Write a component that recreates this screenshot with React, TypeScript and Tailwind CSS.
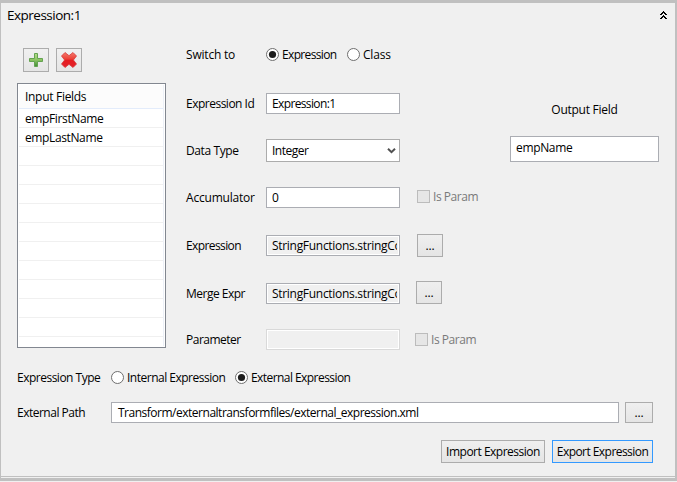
import React from "react";

function Radio({ checked = false }: { checked?: boolean }) {
  return (
    <svg className="block h-[13px] w-[13px] shrink-0" viewBox="0 0 13 13">
      <circle cx="6.5" cy="6.5" r="6" fill="#fff" stroke="#6e6e6e" />
      {checked && <circle cx="6.5" cy="6.5" r="3.6" fill="#1c1c1c" />}
    </svg>
  );
}

function Label({ className = "", children }: { className?: string; children: React.ReactNode }) {
  return <span className={`block shrink-0 whitespace-nowrap leading-4 ${className}`}>{children}</span>;
}

function Browse({ className = "" }: { className?: string }) {
  return (
    <button
      className={`flex shrink-0 items-center justify-center border border-[#acacac] bg-linear-to-b from-[#efefef] to-[#e5e5e5] leading-4 tracking-[-0.2px] ${className}`}
    >
      ...
    </button>
  );
}

function Row({ label, tracking = "", className, children }: { label: string; tracking?: string; className: string; children: React.ReactNode }) {
  return (
    <div className={`flex items-center ${className}`}>
      <div className="w-[80px] shrink-0">
        <Label className={tracking}>{label}</Label>
      </div>
      {children}
    </div>
  );
}

function Field({ children, readOnly = false }: { children?: React.ReactNode; readOnly?: boolean }) {
  return (
    <div
      className={`flex h-[21px] w-[134px] shrink-0 items-center border border-[#abadb3] ${readOnly ? "bg-[#f0f0f0] shadow-[inset_0_0_0_1px_#fff]" : "bg-white"}`}
    >
      <div className="ml-[5px] w-[125px] overflow-hidden whitespace-nowrap leading-4">{children}</div>
    </div>
  );
}

function IsParam({ className = "" }: { className?: string }) {
  return (
    <div className={`flex items-center text-[#7a7a7a] ${className}`}>
      <span className="h-[13px] w-[13px] border border-[#bcbcbc] bg-[#e6e6e6]" />
      <Label className="ml-[3px] tracking-[-0.45px]">Is Param</Label>
    </div>
  );
}

const rows = ["empFirstName", "empLastName", "", "", "", "", "", "", "", "", "", ""];

export default function App() {
  return (
    <div className="h-[482px] w-[677px] overflow-hidden bg-[#f0f0f0] font-['Open_Sans','Noto_Sans',sans-serif] text-[12px] tracking-[-0.5px] text-black">
      <div className="flex h-[481px] flex-col border-t-[3px] border-r-2 border-b-[3px] border-l border-[#c0c0c0] bg-[#f0f0f0]">
        <header className="flex h-[25px] shrink-0 items-start justify-between pr-[8px] pl-[6px]">
          <Label className="pt-[4px] text-[13.5px] tracking-[-0.5px]">Expression:1</Label>
          <svg className="mt-[8px] h-[8px] w-[7px]" viewBox="0 0 7 8" shapeRendering="crispEdges">
            <path
              d="M3 0h1v1H3zM2 1h3v1H2zM1 2h2v1H1zM4 2h2v1H4zM0 3h2v1H0zM5 3h2v1H5zM3 4h1v1H3zM2 5h3v1H2zM1 6h2v1H1zM4 6h2v1H4zM0 7h2v1H0zM5 7h2v1H5z"
              fill="#000"
            />
          </svg>
        </header>

        <main className="flex h-[320px] shrink-0 pt-[20px] pl-4">
          <section className="w-[149px] shrink-0">
            <div className="flex gap-[7px] pl-[6px]">
              <button className="flex h-6 w-[26px] items-center justify-center border border-[#acacac] bg-linear-to-b from-[#f0f0f0] to-[#e5e5e5]">
                <svg className="h-4 w-4" viewBox="0 0 16 16">
                  <defs>
                    <linearGradient id="plus" x1="0" y1="0" x2="0" y2="1">
                      <stop offset="0" stopColor="#b5dc8c" />
                      <stop offset=".5" stopColor="#8cc462" />
                      <stop offset="1" stopColor="#3f8c36" />
                    </linearGradient>
                  </defs>
                  <path d="M6.5 1.5h3v5h5v3h-5v5h-3v-5h-5v-3h5z" fill="url(#plus)" stroke="#64a350" />
                </svg>
              </button>
              <button className="flex h-6 w-[26px] items-center justify-center border border-[#acacac] bg-linear-to-b from-[#f0f0f0] to-[#e5e5e5]">
                <svg className="h-4 w-4" viewBox="0 0 16 16">
                  <defs>
                    <linearGradient id="cross" x1="0" y1="0" x2="0" y2="1">
                      <stop offset="0" stopColor="#f47a6c" />
                      <stop offset=".45" stopColor="#ec3e35" />
                      <stop offset=".5" stopColor="#e51c20" />
                      <stop offset="1" stopColor="#e3222a" />
                    </linearGradient>
                  </defs>
                  <path d="M4 .5 8 3.7 12 .5 15.5 4 12.4 8l3.1 4L12 15.5 8 12.3l-4 3.2L.5 12 3.6 8 .5 4z" fill="url(#cross)" stroke="#d8383a" strokeWidth=".8" />
                </svg>
              </button>
            </div>
            <div className="mt-[11px] h-[265px] border border-[#828790] bg-white p-px">
              <div className="h-full border-r border-[#edf1f8]">
                <div className="flex h-[24px] items-center border-b border-[#e3ecfb] bg-[#fcfcfc] pt-px pl-[6px]">
                  <Label className="tracking-[-0.3px]">Input Fields</Label>
                </div>
                {rows.map((name, i) => (
                  <div key={i} className="flex h-[19px] items-center border-b border-[#f0f0f0] pt-[2px] pl-[6px]">
                    <Label className="tracking-[-0.38px]">{name}</Label>
                  </div>
                ))}
              </div>
            </div>
          </section>

          <section className="ml-5 w-[324px] shrink-0">
            <Row label="Switch to" tracking="tracking-[-0.2px]" className="h-[13px]">
              <Radio checked />
              <Label className="ml-[3px] w-[65px] tracking-[-0.65px]">Expression</Label>
              <Radio />
              <Label className="ml-[3px] tracking-[-0.2px]">Class</Label>
            </Row>
            <Row label="Expression Id" className="mt-[32px] h-[21px]">
              <Field>
                <span className="tracking-[-0.63px]">Expression:1</span>
              </Field>
            </Row>
            <Row label="Data Type" tracking="tracking-[-0.4px]" className="mt-[25px] h-[23px]">
              <div className="flex h-[23px] w-[134px] items-center justify-between border border-[#acacac] bg-white pr-[3px] pl-[5px]">
                <Label>Integer</Label>
                <svg className="h-[6px] w-[9px]" viewBox="0 0 9 6">
                  <path d="M1 .8 4.5 4.2 8 .8" fill="none" stroke="#505050" strokeWidth="2" />
                </svg>
              </div>
            </Row>
            <Row label="Accumulator" tracking="tracking-[-0.2px]" className="mt-[25px] h-[21px]">
              <Field>0</Field>
              <IsParam className="mb-[2px] ml-[17px]" />
            </Row>
            <Row label="Expression" tracking="tracking-[-0.6px]" className="mt-[27px] h-[21px]">
              <Field readOnly>
                <span className="tracking-[-0.3px]">StringFunctions.stringCo</span>
              </Field>
              <Browse className="ml-[17px] h-[23px] w-[26px]" />
            </Row>
            <Row label="Merge Expr" className="mt-[27px] h-[21px]">
              <Field readOnly>
                <span className="tracking-[-0.3px]">StringFunctions.stringCo</span>
              </Field>
              <Browse className="mb-[2px] ml-[16px] h-[23px] w-[26px]" />
            </Row>
            <Row label="Parameter" className="mt-[25px] h-[21px]">
              <div className="h-[21px] w-[134px] shrink-0 border border-[#d9d9d9] bg-[#f0f0f0] shadow-[inset_0_0_0_1px_#fff]" />
              <IsParam className="ml-[15px]" />
            </Row>
          </section>

          <section className="w-[149px] pt-[54px]">
            <Label className="text-center tracking-[-0.25px]">Output Field</Label>
            <div className="mt-[18px] h-[26px] border border-[#abadb3] bg-white pt-[3px] pl-[5px]">
              <Label className="tracking-[-0.35px]">empName</Label>
            </div>
          </section>
        </main>

        <footer className="h-[129px] shrink-0 border-b border-[#c0c0c0] pt-[23px] pl-4">
          <div className="flex h-[13px] items-center">
            <Label className="w-[94px]">Expression Type</Label>
            <Radio />
            <Label className="ml-[3px] w-[108px]">Internal Expression</Label>
            <Radio checked />
            <Label className="ml-[3px] tracking-[-0.56px]">External Expression</Label>
          </div>
          <div className="mt-[18px] flex h-[21px] items-center">
            <Label className="w-[94px]">External Path</Label>
            <div className="flex h-[21px] w-[508px] items-center border border-[#abadb3] bg-white pl-[6px]">
              <Label className="tracking-[-0.49px]">Transform/externaltransformfiles/external_expression.xml</Label>
            </div>
            <Browse className="ml-[6px] h-[21px] w-[28px]" />
          </div>
          <div className="mt-[17px] flex gap-[7px] pl-[424px]">
            <button className="flex h-[23px] w-[104px] items-center justify-center border border-[#acacac] bg-linear-to-b from-[#efefef] to-[#e5e5e5]">
              <Label>Import Expression</Label>
            </button>
            <button className="flex h-[23px] w-[101px] items-center justify-center border border-[#3399ff] bg-linear-to-b from-[#efefef] to-[#e5e5e5]">
              <Label className="tracking-[-0.55px]">Export Expression</Label>
            </button>
          </div>
        </footer>
      </div>
    </div>
  );
}
